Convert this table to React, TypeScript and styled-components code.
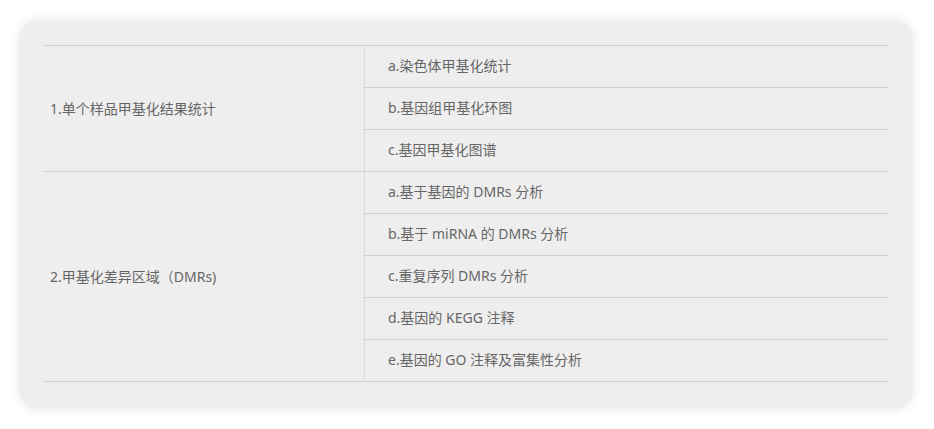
import React from "react";
import styled, { createGlobalStyle } from "styled-components";

const Global = createGlobalStyle`
  html, body { margin: 0; padding: 0; background: #ffffff; }
  body { font-family: "Noto Sans", "Noto Sans CJK SC", sans-serif; }
`;

const Page = styled.div`
  padding: 20px 21px 21px 19px;
`;

const Card = styled.div`
  background: #eeeeee;
  border-radius: 20px;
  box-shadow: 0 0 12px rgba(0, 0, 0, 0.1);
  padding: 25px 25px 27px 24px;
`;

const Table = styled.table`
  width: 100%;
  border-collapse: collapse;
  border-top: 1px solid #cdcfd8;
  border-bottom: 1px solid #cdcfd8;
  table-layout: fixed;
`;

const Row = styled.tr`
  border-top: 1px solid #cdcfd8;
`;

const GroupCell = styled.td`
  width: 314px;
  padding: 0 0 1px 7px;
  font-size: 14px;
  color: #666666;
  vertical-align: middle;
  border-right: 1px solid #d6dbe3;
`;

const ItemCell = styled.td`
  height: 40px;
  padding: 0 0 1px 23px;
  font-size: 14px;
  color: #666666;
  vertical-align: middle;
  line-height: 20px;
`;

const groups = [
  {
    title: "1.单个样品甲基化结果统计",
    items: ["a.染色体甲基化统计", "b.基因组甲基化环图", "c.基因甲基化图谱"],
  },
  {
    title: "2.甲基化差异区域（DMRs)",
    items: [
      "a.基于基因的 DMRs 分析",
      "b.基于 miRNA 的 DMRs 分析",
      "c.重复序列 DMRs 分析",
      "d.基因的 KEGG 注释",
      "e.基因的 GO 注释及富集性分析",
    ],
  },
];

export default function App() {
  return (
    <>
      <Global />
      <Page>
        <Card>
          <Table>
            <tbody>
              {groups.map((g) =>
                g.items.map((item, i) => (
                  <Row key={g.title + item}>
                    {i === 0 && (
                      <GroupCell rowSpan={g.items.length}>{g.title}</GroupCell>
                    )}
                    <ItemCell>{item}</ItemCell>
                  </Row>
                ))
              )}
            </tbody>
          </Table>
        </Card>
      </Page>
    </>
  );
}
